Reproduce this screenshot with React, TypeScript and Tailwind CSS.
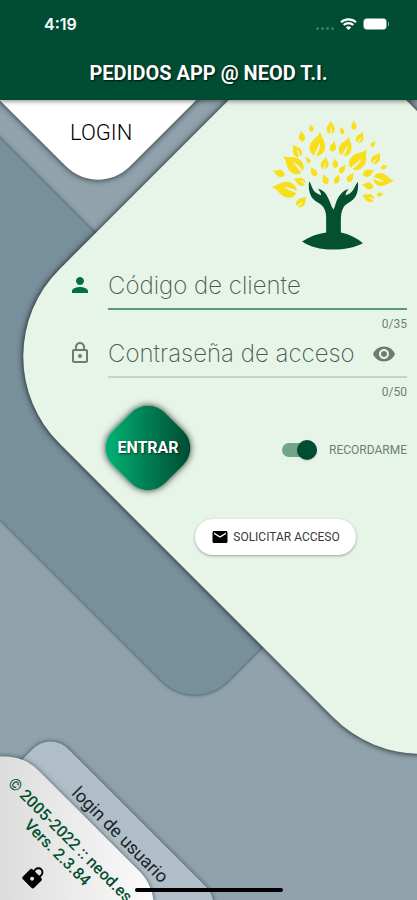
import { useState } from "react";
import { MdEmail, MdLock, MdLockOutline, MdPerson, MdVisibility } from "react-icons/md";

// x, y, length, rotation, split
const leaves: [number, number, number, number, boolean][] = [
  [203, 130, 74, 8, true],
  [287, 137, 60, 14, true],
  [327, 175, 74, 34, true],
  [128, 190, 74, -55, true],
  [103, 266, 76, -82, true],
  [139, 150, 42, -35, true],
  [400, 237, 62, 94, true],
  [378, 172, 40, 32, true],
  [355, 216, 38, 62, false],
  [353, 291, 38, -72, true],
  [330, 110, 36, 22, true],
  [241, 80, 40, -4, true],
  [155, 107, 34, -10, false],
  [183, 82, 24, -12, false],
  [311, 74, 28, -4, false],
  [275, 90, 24, -20, false],
  [249, 137, 34, 10, false],
  [369, 130, 22, 42, false],
  [402, 199, 22, 60, false],
  [224, 187, 38, 6, true],
  [255, 188, 30, -8, false],
  [277, 205, 30, 35, false],
  [190, 213, 32, -30, false],
  [173, 178, 22, -40, false],
  [86, 217, 38, -72, false],
  [148, 242, 38, -72, true],
  [155, 302, 40, 38, true],
  [225, 236, 32, -22, false],
  [261, 235, 30, 22, false],
  [301, 230, 32, 32, false],
  [352, 255, 36, -78, false],
  [390, 281, 22, 78, false],
];

const TreeLogo = () => {
  return (
    <svg viewBox="60 50 380 400" className="w-[127px] h-[134px]" role="img" aria-label="Neod">
      <g fill="#f9df1b">
        {leaves.map(([x, y, size, angle, split]) => (
          <path
            key={`${x}-${y}`}
            transform={`translate(${x} ${y}) rotate(${angle}) scale(${size / 100})`}
            d={
              split
                ? "M2 -50C14 -26 34 -8 31 14C30 34 17 46 0 50C7 32 12 16 8 -6C2 12 -5 28 -8 49C-26 42 -33 30 -30 8C-27 -14 -2 -26 2 -50Z"
                : "M0 -50C8 -26 30 -12 28 14C27 34 12 44 0 50C-12 44 -28 34 -28 12C-27 -12 -4 -26 0 -50Z"
            }
          />
        ))}
      </g>
      <path
        fill="#04502f"
        d="M177 242C184 252 186 264 192 271C198 277 205 281 213 284C213 277 208 271 204 265C216 266 226 276 232 288C240 302 242 315 250 327C256 315 257 302 265 289C273 277 283 267 295 265C291 271 286 277 286 284C295 282 303 276 308 269C313 261 316 252 323 243C325 259 323 276 315 289C306 303 289 307 281 318C273 330 272 345 272 360V395C296 399 320 412 338 427C314 440 282 446 247 446C211 446 180 438 156 422C178 407 203 398 228 395V350C228 335 224 322 214 313C204 305 190 300 183 287C176 274 175 257 177 242Z"
      />
    </svg>
  );
};

const WifiIcon = () => {
  return (
    <svg viewBox="0 0 17 12" className="w-[17px] h-3" fill="none" stroke="currentColor" strokeWidth="2.2" aria-hidden="true">
      <path d="M1 4.2C5.2 0.3 11.8 0.3 16 4.2" />
      <path d="M3.7 7C6.4 4.5 10.6 4.5 13.3 7" />
      <path d="M8.5 12L5.9 9.4C7.4 8 9.6 8 11.1 9.4Z" fill="currentColor" stroke="none" />
    </svg>
  );
};

const StatusBar = () => {
  return (
    <div className="flex items-center justify-between h-12 pl-11 pr-7">
      <span className="font-[Inter,sans-serif] font-semibold text-base">4:19</span>
      <div className="flex items-center gap-1.5">
        <div className="flex gap-0.5 mt-2">
          <span className="size-[3px] rounded-full bg-white/25"></span>
          <span className="size-[3px] rounded-full bg-white/25"></span>
          <span className="size-[3px] rounded-full bg-white/25"></span>
          <span className="size-[3px] rounded-full bg-white/25"></span>
        </div>
        <WifiIcon />
        <div className="flex items-center gap-px">
          <div className="w-6 h-3 rounded-sm border border-white/50">
            <div className="h-full rounded-xs bg-white"></div>
          </div>
          <span className="w-px h-1 bg-white/50"></span>
        </div>
      </div>
    </div>
  );
};

const Backdrop = () => {
  return (
    <div aria-hidden="true">
      <div className="absolute left-[-222px] top-[172px] w-[600px] h-[269px] rotate-45 rounded-[46px] bg-[#78909c] shadow-[0_0_4px_rgba(20,35,45,0.8)]"></div>
      <div className="absolute left-[52px] top-16 w-[634px] h-[488px] rotate-45 rounded-[123px] bg-[#e7f5e9] shadow-[0_0_6px_rgba(0,0,0,0.9)]"></div>
      <div className="absolute left-[-2px] top-[-143px] size-[200px] rotate-45 rounded-[45px] bg-white shadow-[0_0_6px_rgba(0,0,0,0.8)]"></div>
    </div>
  );
};

const Footer = () => {
  return (
    <footer>
      <div className="absolute left-[-72px] bottom-[-127px] size-[245px] rotate-45 rounded-[25px] bg-[#b0bfc7] pt-3 text-center text-lg leading-6 text-[#1c2326] shadow-[0_0_5px_rgba(20,35,45,0.7)]">
        login de usuario
      </div>
      <div className="absolute left-[-115px] bottom-[-125px] size-[239px] rotate-45 rounded-[48px] bg-linear-to-tr from-[#bdbdbd] to-white pt-[18px] flex flex-col items-center text-base leading-[18px] font-medium text-[#04502f] shadow-[0_0_5px_rgba(20,35,45,0.7)]">
        <p className="whitespace-nowrap">© 2005-2022 :: neod.es</p>
        <p>Vers. 2.3.84</p>
        <MdLock className="size-6 mt-3 text-black" />
      </div>
    </footer>
  );
};

export default function App() {
  const [client, setClient] = useState("");
  const [password, setPassword] = useState("");
  const [visible, setVisible] = useState(false);
  const [remember, setRemember] = useState(true);

  return (
    <div className="min-h-screen flex flex-col font-[Roboto,sans-serif] bg-[#90a3ad]">
      <header className="relative z-10 h-[100px] bg-[#004d34] text-white shadow-[0_1px_5px_rgba(0,0,0,0.5)]">
        <StatusBar />
        <p className="text-center text-xl leading-[50px] font-bold text-shadow-[1px_1px_2px_rgba(0,0,0,0.8)]">
          PEDIDOS APP @ NEOD T.I.
        </p>
      </header>

      <main className="relative flex-1 overflow-hidden">
        <Backdrop />
        <div className="relative pb-[340px]">
          <div className="flex items-start justify-between pl-[70px] pr-5 pt-[17px]">
            <h1 className="text-[22px] leading-8 font-light text-black">LOGIN</h1>
            <TreeLogo />
          </div>

          <form className="pt-3 pl-[68px] pr-2.5" onSubmit={(e) => e.preventDefault()}>
            <div className="flex gap-4 h-[68px]">
              <label htmlFor="client" aria-label="Código de cliente" className="pt-2.5">
                <MdPerson className="size-6 text-[#04703f]" />
              </label>
              <div className="flex-1 min-w-0">
                <input
                  id="client"
                  type="text"
                  maxLength={35}
                  value={client}
                  onChange={(e) => setClient(e.target.value)}
                  placeholder="Código de cliente"
                  className="block w-full h-[47px] border-b-2 border-[#5b9778] font-[Inter,sans-serif] font-extralight text-2xl text-[#3c4a41] placeholder:text-[#4a5850] outline-none"
                />
                <p className="pt-1.5 text-right text-xs leading-4 text-[#6f7d74]">{client.length}/35</p>
              </div>
            </div>
            <div className="flex gap-4 h-[68px]">
              <label htmlFor="password" aria-label="Contraseña de acceso" className="pt-2.5">
                <MdLockOutline className="size-6 text-[#6f7a73]" />
              </label>
              <div className="flex-1 min-w-0">
                <div className="flex items-center h-[47px] border-b-2 border-[#c6d3c8]">
                  <input
                    id="password"
                    type={visible ? "text" : "password"}
                    maxLength={50}
                    value={password}
                    onChange={(e) => setPassword(e.target.value)}
                    placeholder="Contraseña de acceso"
                    className="flex-1 min-w-0 font-[Inter,sans-serif] font-extralight text-2xl text-[#3c4a41] placeholder:text-[#4a5850] outline-none"
                  />
                  <button
                    type="button"
                    aria-label="Mostrar contraseña"
                    onClick={() => setVisible(!visible)}
                    className="pr-[11px] pl-2 text-[#6f7a73]"
                  >
                    <MdVisibility className="size-6" />
                  </button>
                </div>
                <p className="pt-1.5 text-right text-xs leading-4 text-[#6f7d74]">{password.length}/50</p>
              </div>
            </div>

            <div className="flex items-center justify-between pl-[43px] pt-3">
              <button
                type="submit"
                className="size-[74px] rotate-45 rounded-3xl bg-linear-to-tr from-[#00ac70] from-15% to-[#004d34] to-90% text-white shadow-[0_0_7px_rgba(0,0,0,0.8)]"
              >
                <span className="flex justify-center -rotate-45 text-base font-bold text-shadow-[1px_1px_2px_rgba(0,0,0,0.6)]">
                  ENTRAR
                </span>
              </button>
              <label className="flex items-center gap-3 pt-1 text-xs text-[#6f7d74]">
                <input
                  type="checkbox"
                  checked={remember}
                  onChange={(e) => setRemember(e.target.checked)}
                  className="peer sr-only"
                />
                <span className="flex items-center justify-start peer-checked:justify-end w-[35px] h-3.5 rounded-full bg-[#6ea58b]">
                  <span className="size-5 rounded-full bg-[#004d34] shadow-sm"></span>
                </span>
                RECORDARME
              </label>
            </div>

            <div className="flex justify-center pt-[34px] pl-[76px]">
              <button
                type="button"
                className="flex items-center justify-center gap-1 w-[161px] h-9 rounded-full bg-white text-xs text-[#3a3a3a] shadow-[0_1px_3px_rgba(0,0,0,0.35)]"
              >
                <MdEmail className="size-[18px] text-black" />
                SOLICITAR ACCESO
              </button>
            </div>
          </form>
        </div>

        <Footer />
        <div className="absolute bottom-2 left-1/2 -translate-x-1/2 w-[148px] h-1 rounded-full bg-black"></div>
      </main>
    </div>
  );
}
